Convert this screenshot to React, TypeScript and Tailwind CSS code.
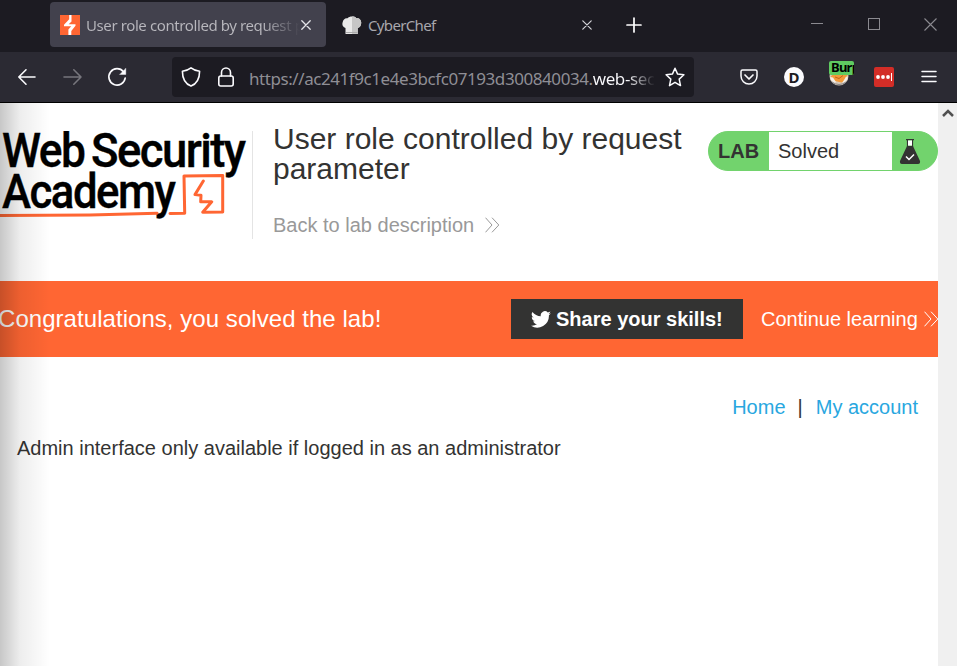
import type { ReactNode } from "react";

const ARIAL = "font-['Liberation_Sans',Arial,sans-serif]";
const UI = "font-['Noto_Sans','Segoe_UI',sans-serif]";

function Icon({ size = 20, children, className = "" }: { size?: number; children: ReactNode; className?: string }) {
  return (
    <svg width={size} height={size} viewBox={`0 0 ${size} ${size}`} fill="none" stroke="currentColor" strokeWidth="1.5" strokeLinecap="round" strokeLinejoin="round" className={`shrink-0 ${className}`}>
      {children}
    </svg>
  );
}

function BoltFavicon() {
  return (
    <svg width="20" height="20" viewBox="0 0 20 20" className="shrink-0">
      <rect width="20" height="20" fill="#ff6633" />
      <path d="M9.200 0h2.300v6.500L8.700 9.200h6.800v1.500L11.300 16v4H8.400v-5.500l2.800-3.300H4V9.700l5.200-5.500z" fill="#fff" />
    </svg>
  );
}

function ChefHat() {
  return (
    <svg width="20" height="19" viewBox="0 0 20 19" className="mt-px shrink-0">
      <path d="M3.500 18v-6C.5 11 0 8.500.600 6.500 1 3.500 3 1.800 5.500 2.200 7 .200 12.500-.100 14.200 2c3-.2 5.200 2 5 5-.1 3-1.700 4.500-3.500 5v6z" fill="#e9e9e9" />
      <path d="M10 .600c2 0 3.400.500 4.200 1.400 3-.2 5.200 2 5 5-.1 3-1.700 4.500-3.500 5v6H10z" fill="#c6c6c6" />
      <path d="M4 16.500h11.500" stroke="#aaa" />
    </svg>
  );
}

function TabBar() {
  return (
    <div className={`flex h-[52px] items-start bg-[#1c1b22] ${UI}`}>
      <div className="ml-[50px] mt-[2px] flex h-[45px] w-[276px] items-center rounded bg-[#42414d] pl-[10px] pr-[15px]">
        <BoltFavicon />
        <div className="ml-[6px] mt-px w-[214px] shrink-0 overflow-hidden whitespace-nowrap bg-gradient-to-r from-[#b9b8be] from-82% to-transparent bg-clip-text text-[15px] leading-[22px] tracking-[-0.400px] text-transparent">
          User role controlled by request p
        </div>
        <Icon size={10} className="ml-px text-[#e4e4e8]"><path d="M.8.8l8.400 8.400M9.200.8L.8 9.200" strokeWidth="1.3" /></Icon>
      </div>
      <div className="flex h-[49px] w-[276px] items-center pl-[16px] pr-[10px]">
        <ChefHat />
        <span className="ml-[6px] mt-[2px] grow text-[15px] tracking-[-0.650px] text-[#a8a7ad]">CyberChef</span>
        <Icon size={10} className="text-[#d4d4d8]"><path d="M.8.8l8.400 8.400M9.200.8L.8 9.200" strokeWidth="1.2" /></Icon>
      </div>
      <Icon size={16} className="ml-[24px] mt-[17px] text-white"><path d="M8 1v14M1 8h14" strokeWidth="1.7" /></Icon>
      <div className="ml-[169px] flex h-[48px] items-center text-[#8b8a90]">
        <svg width="12" height="12" className="shrink-0"><path d="M0 5.500h12" stroke="currentColor" /></svg>
        <svg width="12" height="12" className="ml-[45px] shrink-0"><rect x=".5" y=".5" width="11" height="11" fill="none" stroke="currentColor" /></svg>
        <svg width="13" height="13" className="ml-[44px] shrink-0"><path d="M.5.5l12 12M12.500.5l-12 12" stroke="currentColor" strokeWidth="1.100" /></svg>
      </div>
    </div>
  );
}

function BurpFox() {
  return (
    <div className="relative h-[26px] w-[25px]">
      <svg width="20" height="20" viewBox="0 0 20 20" className="absolute left-0 top-[5px]">
        <circle cx="10" cy="10" r="9.500" fill="#d8c8b7" />
        <path d="M1.500 11 4 8h12l3 2-2.500 4-4 2.500L6 15z" fill="#f39a3a" />
        <path d="M1 11l3 .500 3 4.500-2 1.500L2 14zM18.800 10l-2 1-3.300 5.500 2 .5 3-4z" fill="#f5eee5" />
        <path d="M6 11l4 1.500L14 9.500" stroke="#c66518" fill="none" />
        <path d="M3 16q7 5 14 0" stroke="#85858b" fill="none" />
      </svg>
      <div className={`absolute left-0 top-0 h-[14px] w-[25px] overflow-hidden rounded-[2px] bg-[#5fcb61] pl-[2px] text-[13px] font-bold leading-[13px] tracking-[-0.750px] text-black ${UI}`}>Burp</div>
    </div>
  );
}

function Toolbar() {
  return (
    <div className={`flex h-[51px] items-center border-b border-black bg-[#2b2a33] text-[#fbfbfe] ${UI}`}>
      <Icon className="ml-[17px]"><path d="M18 10H1.800M9 2.800 1.800 10 9 17.200" strokeWidth="1.600" /></Icon>
      <Icon className="ml-[26px] text-[#77767d]"><path d="M1 10h17M10.800 2.800 18 10l-7.200 7.200" strokeWidth="1.600" /></Icon>
      <Icon className="ml-[24px]">
        <path d="M16.500 4.800A8.200 8.200 0 1 0 18.200 11" strokeWidth="1.700" />
        <path d="M18.800 1.500v6h-6z" fill="currentColor" strokeWidth=".4" />
      </Icon>
      <div className="ml-[45px] flex h-10 w-[522px] items-center rounded bg-[#1c1b22] pl-[9px] pr-[9px]">
        <Icon><path d="M10 .900c2.500 2 5.500 3 8.600 3.300 0 6.300-2.300 12.300-8.600 14.900C3.700 16.500 1.400 10.500 1.400 4.200 4.500 3.900 7.500 2.900 10 .900z" strokeWidth="1.600" /></Icon>
        <Icon className="ml-[15px]">
          <path d="M5.500 9V5.500a4.500 4.500 0 0 1 9 0V9" strokeWidth="1.600" />
          <rect x="2.800" y="9" width="14.400" height="10" rx="2" strokeWidth="1.600" />
        </Icon>
        <div className="ml-[13px] mt-[3px] flex w-[406px] shrink-0 overflow-hidden whitespace-nowrap text-[17px] leading-6">
          <span className="tracking-[-0.430px] text-[#8f8e95]">https://ac241f9c1e4e3bcfc07193d300840034.</span>
          <span className="bg-gradient-to-r from-[#fbfbfe] from-55% to-transparent bg-clip-text tracking-[-0.400px] text-transparent">web-sec</span>
        </div>
        <Icon className="ml-[10px]"><path d="M10 1.200l2.600 5.900 6.300.7-4.700 4.300 1.300 6.500L10 15.300l-5.500 3.300 1.300-6.500L1.100 7.800l6.300-.7z" strokeWidth="1.500" /></Icon>
      </div>
      <Icon size={18} className="ml-[46px]">
        <path d="M2.500 2h13a1.500 1.500 0 0 1 1.500 1.500V8A8 8 0 0 1 1 8V3.500A1.500 1.500 0 0 1 2.500 2z" strokeWidth="1.500" />
        <path d="M5 7l4 4 4-4" strokeWidth="1.700" />
      </Icon>
      <div className="ml-[26px] flex size-5 items-center justify-center rounded-full bg-[#fbfbfe] text-[15px] font-bold leading-none text-[#1c1b22]">D</div>
      <div className="-mt-[7px] ml-[25px]"><BurpFox /></div>
      <svg width="20" height="20" viewBox="0 0 20 20" className="ml-[20px] shrink-0">
        <rect width="20" height="20" rx="2" fill="#d32d27" />
        <circle cx="4" cy="10" r="1.900" fill="#fff" /><circle cx="9" cy="10" r="1.900" fill="#fff" /><circle cx="14" cy="10" r="1.900" fill="#fff" />
        <path d="M17.500 6v8" stroke="#fff" />
      </svg>
      <Icon size={16} className="ml-[27px]"><path d="M1 2.500h14M1 7.500h14M1 12.500h14" strokeWidth="1.500" /></Icon>
    </div>
  );
}

function AcademyLogo() {
  return (
    <svg width="252" height="108" viewBox="0 0 252 108" className="shrink-0">
      <g fill="#000" stroke="#000" strokeWidth=".4" fontFamily="Roboto, sans-serif" fontWeight="500" fontSize="47.500" letterSpacing="-1.600">
        <text x="2" y="36" textLength="82.500" lengthAdjust="spacingAndGlyphs">Web</text>
        <text x="91" y="36" textLength="153.500" lengthAdjust="spacingAndGlyphs">Security</text>
        <text x="2" y="77" textLength="172.500" lengthAdjust="spacingAndGlyphs">Academy</text>
      </g>
      <g fill="none" stroke="#ff6633" strokeWidth="3" strokeLinejoin="round" strokeLinecap="round">
        <path d="M0 84.500 90 84l67-1.800M170 82.400l14.700-.2-.7-37.200 38.700-.5v36.500l-20 .3 9-10.500h-11l.3-6.500-6-.700L203.300 50" />
      </g>
    </svg>
  );
}

function Chevrons({ className = "" }: { className?: string }) {
  return (
    <svg width="15" height="16" viewBox="0 0 15 16" className={`shrink-0 ${className}`} fill="none" stroke="currentColor">
      <path d="M.5.7 7 8 .5 15.300M7 .7 13.800 8 7 15.300" />
    </svg>
  );
}

function LabStatus() {
  return (
    <div className="mt-[28px] flex h-10 w-[230px] shrink-0 overflow-hidden rounded-[20px] border border-[#72d36d] bg-[#72d36d] text-[20px] leading-[38px] text-[#333332]">
      <span className="w-[60px] pl-[9px] font-bold">LAB</span>
      <span className="w-[123px] bg-white pl-[9px]">Solved</span>
      <svg width="22" height="26" viewBox="0 0 22 26" className="ml-[7px] mt-[6px]">
        <path d="M7 1.600h8M8.500 2v7M13.500 2v7" stroke="#333332" strokeWidth="1.200" />
        <path d="M9 2.600h4v5H9z" fill="#fff" />
        <path d="M8 8h6l7 15q.5 3-2 3H3q-2.500 0-2-3z" fill="#333332" />
        <path d="m7 18.500 3 3 5-5" fill="none" stroke="#fff" strokeWidth="1.500" />
      </svg>
    </div>
  );
}

export default function App() {
  return (
    <div className="relative flex h-[666px] w-[957px] flex-col overflow-hidden bg-white">
      <TabBar />
      <Toolbar />
      <div className={`flex grow text-[#333332] ${ARIAL}`}>
        <main className="w-[938px] overflow-hidden">
          <header className="flex h-[178px]">
            <div className="mt-[28px] h-[108px] w-[253px] border-r border-[#e4e4e4]"><AcademyLogo /></div>
            <div className="ml-[20px] w-[435px]">
              <h1 className="mt-[21px] text-[30px] leading-[30px]">User role controlled by request<br />parameter</h1>
              <a className="mt-[29px] flex items-center text-[20px] leading-6 text-[#999]">Back to lab description<Chevrons className="ml-[11px]" /></a>
            </div>
            <LabStatus />
          </header>
          <section className="flex h-[76px] items-center bg-[#ff6633] text-white">
            <p className="-ml-[2px] w-[513px] shrink-0 whitespace-nowrap text-[24px] tracking-[0.050px]">Congratulations, you solved the lab!</p>
            <button className="flex h-10 w-[232px] shrink-0 items-center whitespace-nowrap bg-[#333332] pl-[20px] text-[20px] font-bold">
              <svg width="20" height="17" viewBox="0 0 24 20" className="mr-[5px] shrink-0" fill="#fff">
                <path d="M24 2.400a9.800 9.800 0 0 1-2.800.8A5 5 0 0 0 23.300.500a10 10 0 0 1-3.100 1.200A4.900 4.900 0 0 0 11.800 6.200 14 14 0 0 1 1.700 1a4.900 4.900 0 0 0 1.500 6.600A4.900 4.900 0 0 1 1 7a4.900 4.900 0 0 0 3.900 4.900 5 5 0 0 1-2.200.100 4.900 4.900 0 0 0 4.600 3.400A9.900 9.900 0 0 1 0 17.500 14 14 0 0 0 21.500 5z" />
              </svg>
              Share your skills!
            </button>
            <a className="ml-[18px] flex shrink-0 items-center whitespace-nowrap text-[20px]">Continue learning<Chevrons className="ml-[6px]" /></a>
          </section>
          <nav className="mr-[20px] mt-[38px] flex justify-end text-[20px] leading-6 text-[#29a7df]">
            <a>Home</a><span className="ml-[12px] mr-[13px] text-[#333332]">|</span><a>My account</a>
          </nav>
          <p className="ml-[17px] mt-[17px] text-[20px] leading-6">Admin interface only available if logged in as an administrator</p>
        </main>
        <aside className="flex w-[19px] justify-center bg-[#f0f0f0] pt-[5px]">
          <svg width="12" height="10" viewBox="0 0 12 10" fill="none" stroke="#505050" strokeWidth="2.500"><path d="m1 8 5-5 5 5" /></svg>
        </aside>
      </div>
      <div className="pointer-events-none absolute bottom-0 left-0 top-[103px] w-[50px] bg-gradient-to-r from-black/22 via-black/7 via-40% to-transparent" />
    </div>
  );
}
